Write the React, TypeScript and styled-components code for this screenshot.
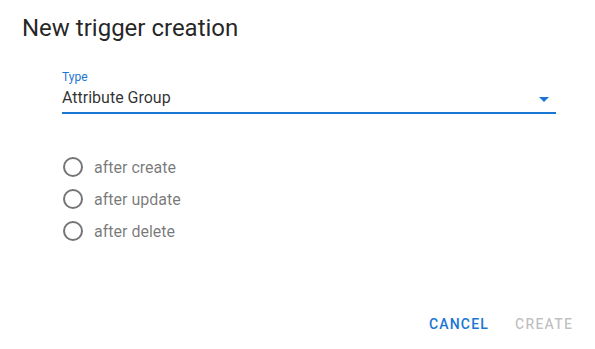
import React from "react";
import styled, { createGlobalStyle } from "styled-components";

const GlobalStyle = createGlobalStyle`
  html, body {
    margin: 0;
    padding: 0;
    background: #ffffff;
    font-family: Roboto, "Liberation Sans", sans-serif;
  }
`;

const StyledDialog = styled.div`
  width: 595px;
  height: 349px;
  box-sizing: border-box;
  display: flex;
  flex-direction: column;
  background: white;
`;

const StyledTitle = styled.h2`
  margin: 0;
  padding: 12px 22px 0 22px;
  font-size: 24px;
  font-weight: 400;
  line-height: 32px;
  color: rgba(0, 0, 0, 0.87);
`;

const StyledContent = styled.div`
  flex: 1;
  padding: 26px 39px 0 62px;
`;

const StyledField = styled.div`
  position: relative;
  border-bottom: 2px solid #1976d2;
  padding-bottom: 5px;
`;

const StyledLabel = styled.div`
  font-size: 12px;
  line-height: 14px;
  color: #1976d2;
`;

const StyledValue = styled.div`
  margin-top: 4px;
  font-size: 16px;
  line-height: 19px;
  color: rgba(0, 0, 0, 0.82);
`;

const StyledArrow = styled.svg`
  position: absolute;
  right: 0;
  top: 17px;
  width: 24px;
  height: 24px;
  fill: #1976d2;
`;

const StyledRadioGroup = styled.div`
  display: flex;
  flex-direction: column;
  gap: 12px;
  margin-top: 43px;
`;

const StyledRadioRow = styled.label`
  display: flex;
  align-items: center;
  gap: 11px;
  height: 20px;
  font-size: 16px;
  color: rgba(0, 0, 0, 0.54);
`;

const StyledCircle = styled.span`
  width: 16px;
  height: 16px;
  border: 2px solid rgba(0, 0, 0, 0.54);
  border-radius: 50%;
  margin-left: 1px;
`;

const StyledActions = styled.div`
  display: flex;
  justify-content: flex-end;
  gap: 26px;
  padding: 0 22px 17px 0;
`;

const StyledButton = styled.button<{ $disabled?: boolean }>`
  border: none;
  background: none;
  padding: 0;
  font-family: Roboto, "Liberation Sans", sans-serif;
  font-size: 14px;
  font-weight: 500;
  letter-spacing: 1.2px;
  line-height: 16px;
  color: ${(p) => (p.$disabled ? "rgba(0, 0, 0, 0.26)" : "#1976d2")};
`;

const options = ["after create", "after update", "after delete"];

const App = () => {
  return (
    <>
      <GlobalStyle />
      <StyledDialog>
        <StyledTitle>New trigger creation</StyledTitle>
        <StyledContent>
          <StyledField>
            <StyledLabel>Type</StyledLabel>
            <StyledValue>Attribute Group</StyledValue>
            <StyledArrow viewBox="0 0 24 24">
              <path d="M7 10l5 5 5-5z" />
            </StyledArrow>
          </StyledField>
          <StyledRadioGroup>
            {options.map((o) => (
              <StyledRadioRow key={o}>
                <StyledCircle />
                {o}
              </StyledRadioRow>
            ))}
          </StyledRadioGroup>
        </StyledContent>
        <StyledActions>
          <StyledButton>CANCEL</StyledButton>
          <StyledButton $disabled>CREATE</StyledButton>
        </StyledActions>
      </StyledDialog>
    </>
  );
};

export default App;
